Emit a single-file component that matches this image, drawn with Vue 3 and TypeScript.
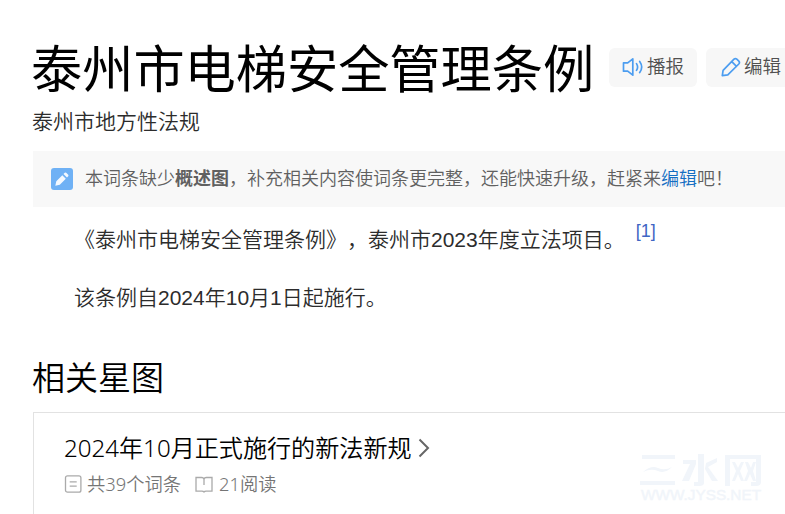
<script setup lang="ts">
import { ref } from 'vue'

const title = ref('泰州市电梯安全管理条例')
const subtitle = ref('泰州市地方性法规')
const star = { title: '2024年10月正式施行的新法新规', entries: '共39个词条', reads: '21阅读' }
</script>

<template>
  <main class="page">
    <header class="head">
      <h1>{{ title }}</h1>
      <button class="action" type="button">
        <svg class="speaker" width="22" height="20" viewBox="0 0 22 20">
          <path d="M1.500 5.800h4.200L10.800 1.800v16.400L5.700 14.200H1.500z" />
          <path d="M14.500 6.600q2.200 3.400 0 6.800M17.700 4.400q4 5.600 0 11.200" />
        </svg>
        <span>播报</span>
      </button>
      <button class="action edit" type="button">
        <svg class="pen" width="20" height="20" viewBox="0 0 20 20">
          <path d="M1.300 18.700l.8-5.300L13 2.200q1.400-1.300 2.800 0l2 2q1.300 1.400 0 2.800L6.800 17.900zM10.800 4.600l4.700 4.700" />
        </svg>
        <span>编辑</span>
      </button>
    </header>
    <p class="subtitle">{{ subtitle }}</p>
    <section class="notice">
      <svg width="22" height="22" viewBox="0 0 22 22">
        <rect width="22" height="22" rx="3" fill="#6fb1f5" />
        <path d="M4.300 17.700l1-4.500 6-6 3.500 3.500-6 6zM12.500 6l1.200-1.200q.8-.6 1.500 0l2 2q.6.7 0 1.500l-1.200 1.200z" fill="#f4f9ff" />
      </svg>
      <p>本词条缺少<b>概述图</b>，补充相关内容使词条更完整，还能快速升级，赶紧来<a>编辑</a>吧！</p>
    </section>
    <article class="summary">
      <p>《泰州市电梯安全管理条例》，泰州市2023年度立法项目。<sup>[1]</sup></p>
      <p>该条例自2024年10月1日起施行。</p>
    </article>
    <h2>相关星图</h2>
    <section class="card">
      <div class="info">
        <h3>
          <span>{{ star.title }}</span>
          <svg width="12" height="20" viewBox="0 0 12 20"><path d="M1.500 1.500L10 10l-8.500 8.500" /></svg>
        </h3>
        <div class="meta">
          <svg width="18" height="18" viewBox="0 0 18 18"><rect x="1.500" y=".8" width="15.400" height="16.400" rx="2" /><path d="M5.700 6.800h7M5.700 11.200h7" /></svg>
          <span class="entries">{{ star.entries }}</span>
          <svg class="book" width="18" height="18" viewBox="0 0 18 18"><path d="M9 10V4.500Q9 2.500 6.500 2.500H1v13.700h6q1.500 0 2 .8.500-.8 2-.8h6V2.500h-5.500Q9 2.500 9 4.500" /></svg>
          <span>{{ star.reads }}</span>
        </div>
      </div>
      <svg class="mark" width="124" height="52" viewBox="0 0 124 52">
        <g class="glyphs">
          <path d="M2 1h33v4H2zM0 27h35v4H0zM3 18q8-7 15-4t14-1q-7 7-14 4t-15 1z" />
          <path d="M58 0h6v29q0 3-5 3h-5v-4h4zM43 6h13v4L49 27h-7l8-17h-7zM66 9l11-5v4l-9 5 10 14h-6l-7-12z" />
          <path d="M85 1h36v27q0 4-5 4h-5v-4h5V5H90v27h-5zM92 8h3l3 6 3-6h3l-4 9 4 10h-3l-3-7-3 7h-3l4-10zM105 8h3l3 6 2-6h3l-3 9 3 10h-3l-3-7-3 7h-3l4-10z" />
        </g>
        <text x="1" y="46" textLength="120" lengthAdjust="spacingAndGlyphs">WWW.JYSS.NET</text>
      </svg>
    </section>
  </main>
</template>

<style>
body {
  background: #fff;
  overflow: hidden;
}
</style>

<style scoped>
.page {
  box-sizing: border-box;
  width: 785px;
  height: 514px;
  padding: 38px 0 0 32px;
  overflow: hidden;
  color: #2c2c2c;
  font-family: "Liberation Sans", "Noto Sans CJK SC", sans-serif;
  text-spacing-trim: space-all;
}
h1, h2, h3, p { margin: 0; font-weight: 400; white-space: nowrap; }
.head { display: flex; align-items: flex-start; height: 64px; }
h1 { width: 578px; margin-left: -1px; flex: none; color: #000; font-size: 51.200px; line-height: 65px; }
.action {
  display: flex;
  flex: none;
  align-items: center;
  box-sizing: border-box;
  width: 88px;
  height: 39px;
  margin: 10px 9px 0 0;
  padding: 0 0 2px 13px;
  border: 0;
  border-radius: 6px;
  background: #f7f7f7;
  color: #505050;
  font: 350 18.500px/30px "Noto Sans CJK SC", sans-serif;
}
.action svg { flex: none; fill: none; stroke: #4c9df0; stroke-width: 1.700; stroke-linejoin: round; stroke-linecap: round; }
.action span { margin-top: -3px; white-space: nowrap; }
.speaker { margin-right: 3px; }
.edit { padding-left: 15px; }
.pen { margin-right: 3px; }
.subtitle { height: 49px; font-size: 21px; line-height: 40px; font-weight: 350; }
.notice {
  display: flex;
  align-items: center;
  height: 56px;
  margin-left: 1px;
  padding-left: 18px;
  background: #f8f8f8;
}
.notice p { margin-left: 12px; color: #606060; font-size: 18px; line-height: 28px; font-weight: 350; }
.notice b { font-weight: 700; }
.notice a { color: #136ec2; }
.summary { padding: 4px 0 0 42px; }
.summary p { height: 58px; font-size: 21px; line-height: 58px; font-weight: 350; }
.summary sup { margin-left: 11px; color: #3f66c4; font-size: 18px; line-height: 0; vertical-align: 10px; }
h2 { height: 85px; color: #000; font-size: 33px; line-height: 104px; font-weight: 350; }
.card {
  display: flex;
  justify-content: space-between;
  box-sizing: border-box;
  height: 110px;
  margin-left: 1px;
  padding: 17px 21px 0 30px;
  border: solid #e2e2e2;
  border-width: 1px 0 0 1px;
  font-family: "Noto Sans", "Noto Sans CJK SC", sans-serif;
}
h3 { display: flex; align-items: center; height: 36px; color: #000; font-size: 24.100px; line-height: 36px; font-weight: 350; }
h3 svg { margin-left: 6px; fill: none; stroke: #666; stroke-width: 2; }
.meta { display: flex; align-items: center; height: 36px; color: #757575; font-size: 18.300px; line-height: 36px; font-weight: 350; }
.meta svg { flex: none; margin-right: 5px; fill: none; stroke: #aaa; stroke-width: 1.300; }
.meta .book { margin-right: 6px; }
.entries { margin-right: 14px; }
.mark { margin-top: 24px; fill: #f1f5fa; }
.mark text { font: 400 14px "Liberation Sans", sans-serif; stroke: #f1f5fa; stroke-width: .4; }
</style>
